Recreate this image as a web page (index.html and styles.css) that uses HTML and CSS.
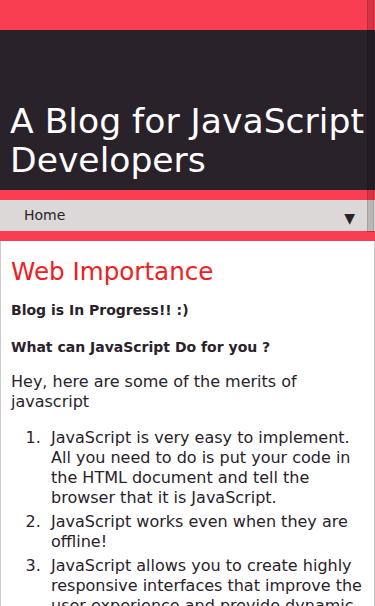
FILE: index.html
```html
<!DOCTYPE html>
<html>
<head>
<meta charset="utf-8">
<link rel="stylesheet" href="styles.css">
</head>
<body>
<header class="site-header">
  <div class="top-strip"></div>
  <div class="banner">
    <h1 class="title">A Blog for JavaScript Developers</h1>
  </div>
  <nav class="nav">
    <span class="nav-link">Home</span>
    <span class="nav-arrow">▼</span>
  </nav>
  <div class="side-bar"></div>
</header>
<main class="content">
  <h2 class="heading">Web Importance</h2>
  <p class="bold">Blog is In Progress!! :)</p>
  <p class="bold question">What can JavaScript Do for you ?</p>
  <p class="intro">Hey, here are some of the merits of javascript</p>
  <ol class="merits">
    <li>JavaScript is very easy to implement. All you need to do is put your code in the HTML document and tell the browser that it is JavaScript.</li>
    <li>JavaScript works even when they are offline!</li>
    <li>JavaScript allows you to create highly responsive interfaces that improve the user experience and provide dynamic functionality, without having to wait for the server to react and show another page.</li>
  </ol>
</main>
</body>
</html>
```

FILE: styles.css
```css
html, body {
  margin: 0;
  padding: 0;
  background: #f93e52;
  font-family: "DejaVu Sans", sans-serif;
  color: #2a222b;
}
.site-header {
  position: relative;
}
.top-strip {
  height: 30px;
  background: #f93e52;
}
.banner {
  height: 160px;
  background: #2a222b;
  display: flex;
  align-items: flex-end;
  box-sizing: border-box;
  padding: 0 10px 10px;
}
.title {
  margin: 0;
  font-size: 34.6px;
  font-weight: normal;
  line-height: 39px;
  color: #ffffff;
}
.nav {
  margin-top: 10px;
  height: 31px;
  background: #dcd8d8;
  display: flex;
  align-items: center;
  justify-content: space-between;
  padding: 0 20px 0 24px;
  font-size: 14px;
}
.nav-link {
  margin-top: -2px;
}
.nav-arrow {
  font-size: 14px;
  margin-top: 4px;
}
.side-bar {
  position: absolute;
  left: 367px;
  top: 0;
  width: 5px;
  height: 231px;
  background: rgba(0, 0, 0, 0.15);
  border: 1px solid rgba(0, 0, 0, 0.12);
  border-top: 0;
}
.content {
  margin-top: 10px;
  background: #ffffff;
  border: 1px solid #cccccc;
  border-top: 0;
  padding: 15px 10px 10px;
  min-height: 400px;
}
.heading {
  margin: 0 0 14px;
  font-size: 24.6px;
  font-weight: normal;
  color: #f0201e;
  line-height: 32px;
}
.bold {
  margin: 0 0 20px;
  font-size: 14px;
  font-weight: bold;
  line-height: 17px;
}
.bold.question {
  margin-bottom: 16px;
}
.intro {
  font-size: 16px;
  line-height: 20px;
  margin: 0 0 16px;
}
.merits {
  margin: 0;
  padding-left: 40px;
  font-size: 16px;
  line-height: 20px;
}
.merits li {
  margin-bottom: 4px;
}
.merits li::marker {
  content: counter(list-item) ".\00a0\00a0";
}
```
